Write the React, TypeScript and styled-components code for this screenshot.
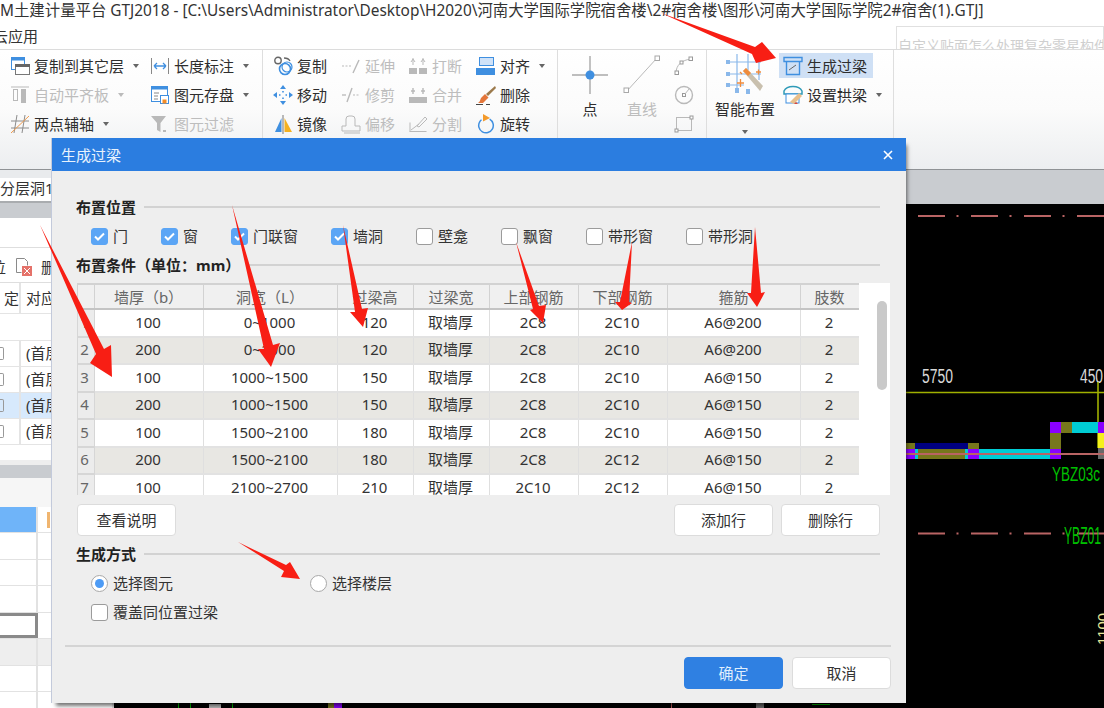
import React from "react";
import styled, { createGlobalStyle } from "styled-components";

const FONT = `"Noto Sans", "Noto Sans CJK SC", sans-serif`;

const GlobalStyle = createGlobalStyle`
  html, body {
    margin: 0;
    padding: 0;
    background: #fff;
    overflow: hidden;
  }
  * {
    box-sizing: border-box;
  }
`;

/* ---------- ribbon icons ---------- */

const Svg = ({ children, size = 20, w, h }: { children: React.ReactNode; size?: number; w?: number; h?: number }) => (
  <svg width={w ?? size} height={h ?? size} viewBox={`0 0 ${w ?? size} ${h ?? size}`} fill="none">
    {children}
  </svg>
);

const BLUE = "#3f8fe0";
const GREY = "#b9b9b9";

const icons: Record<string, React.ReactNode> = {
  copyLayer: (
    <Svg>
      <rect x="1.5" y="1.5" width="13" height="12" fill="#fff" stroke={BLUE} />
      <rect x="1" y="1" width="14" height="3.5" fill={BLUE} />
      <rect x="5.5" y="8.5" width="14" height="10" fill="#fff" stroke="#777" />
      <rect x="5" y="8" width="15" height="3" fill="#666" />
    </Svg>
  ),
  autoFlat: (
    <Svg>
      <path d="M1 2h18" stroke={GREY} />
      <rect x="3.5" y="4.5" width="4" height="11" stroke={GREY} />
      <rect x="11" y="4" width="5" height="14" fill={GREY} />
    </Svg>
  ),
  twoPoint: (
    <Svg>
      <path d="M7 1l-3 18M15 1l-3 18M1 7h18M1 14h18" stroke="#8c8c8c" />
      <path d="M1 19L19 2" stroke="#ee9a4d" />
    </Svg>
  ),
  length: (
    <Svg>
      <path d="M1.5 2v16M18.5 2v16" stroke="#888" />
      <path d="M4 10h12M4 10l3-3M4 10l3 3M16 10l-3-3M16 10l-3 3" stroke={BLUE} strokeWidth="1.3" />
    </Svg>
  ),
  save: (
    <Svg>
      <rect x="1.5" y="1.5" width="16" height="15" fill="#fff" stroke={BLUE} />
      <rect x="1" y="1" width="17" height="3.5" fill={BLUE} />
      <path d="M4 8h5M4 11h4M4 14h4" stroke="#888" />
      <rect x="10.5" y="10.5" width="8" height="8" fill="#fff" stroke={BLUE} />
      <rect x="12.5" y="14.5" width="4" height="4" fill="#f28c28" />
    </Svg>
  ),
  filter: (
    <Svg>
      <path d="M1 2h15l-5.5 7v9L7 16V9z" fill={GREY} />
      <path d="M13 17h3" stroke={GREY} strokeWidth="2" />
    </Svg>
  ),
  copy: (
    <Svg>
      <circle cx="5" cy="4.5" r="3.2" stroke="#666" strokeWidth="1.4" />
      <circle cx="12" cy="13" r="5.5" stroke={BLUE} strokeWidth="1.6" />
      <circle cx="14" cy="11" r="5" stroke={BLUE} strokeWidth="1.2" />
      <path d="M11 2c3 0 5 1 6 3" stroke="#666" strokeWidth="1.3" />
    </Svg>
  ),
  move: (
    <Svg>
      <path d="M10 0l3 4H7zM10 20l3-4H7zM0 10l4-3v6zM20 10l-4-3v6z" fill={BLUE} />
      <path d="M6 10h1.5M12.5 10H14M10 6v1.5M10 12.5V14" stroke={BLUE} strokeWidth="1.6" />
    </Svg>
  ),
  mirror: (
    <Svg>
      <path d="M8.5 4v14H2z" fill={BLUE} />
      <path d="M11.5 4v14H19z" fill="#f5b120" />
      <path d="M10 1v19" stroke="#777" />
    </Svg>
  ),
  extend: (
    <Svg>
      <path d="M1 10h10" stroke={GREY} strokeDasharray="2 1.5" />
      <path d="M12 17l6-13" stroke={GREY} strokeWidth="1.4" />
    </Svg>
  ),
  trim: (
    <Svg>
      <path d="M1 10h4" stroke={GREY} strokeWidth="1.3" />
      <path d="M6 17l5-14" stroke={GREY} strokeWidth="1.4" />
      <path d="M12 10h7" stroke={GREY} strokeDasharray="2 1.5" />
    </Svg>
  ),
  offset: (
    <Svg>
      <path d="M1 17v-5h4V5a3 3 0 013-3h3a3 3 0 013 3v7h5v5z" stroke={GREY} />
      <path d="M3 19h16" stroke={GREY} />
    </Svg>
  ),
  breakTool: (
    <Svg>
      <rect x="1" y="12" width="8" height="6" fill={GREY} />
      <rect x="11" y="12" width="8" height="6" fill={GREY} />
      <path d="M5 2v7M15 2v7M3 6l2-3 2 3M13 6l2-3 2 3" stroke={GREY} />
    </Svg>
  ),
  merge: (
    <Svg>
      <rect x="1" y="12" width="18" height="6" fill={GREY} />
      <path d="M5 3v6M15 3v6M3 6h4M13 6h4" stroke={GREY} strokeWidth="1.4" />
    </Svg>
  ),
  split: (
    <Svg>
      <path d="M1.5 17.5h17M2 8.5v9h15" stroke={GREY} />
      <path d="M3 16l8-6" stroke={GREY} />
      <path d="M9 12l8-9 2 2-8 8z" stroke={GREY} />
    </Svg>
  ),
  align: (
    <Svg>
      <rect x="3.5" y="1.5" width="14" height="8" fill="#cfe2f8" stroke={BLUE} />
      <rect x="0" y="12" width="19" height="7" fill={BLUE} />
    </Svg>
  ),
  brush: (
    <Svg>
      <path d="M19 1l-9 8 2 2 8-8z" fill="#9c7a4c" />
      <path d="M9 9l3.5 3.5L7 18H2c2-1 2-3 3-5z" fill="#e4763a" />
      <path d="M0 19.5h7M10 19.5h4" stroke="#444" />
    </Svg>
  ),
  rotate: (
    <Svg>
      <circle cx="10" cy="11.5" r="7.3" stroke={BLUE} strokeWidth="1.5" strokeDasharray="37 9" transform="rotate(-60 10 11.5)" />
      <path d="M7 0l7 4-7 3.5z" fill="#f39a2c" />
    </Svg>
  ),
  point: (
    <Svg w={38} h={40}>
      <path d="M19 1v38M1 20h36" stroke="#a9a9a9" strokeWidth="1.4" />
      <circle cx="19" cy="20" r="4.5" fill={BLUE} />
    </Svg>
  ),
  line: (
    <Svg w={38} h={40}>
      <path d="M3 37L34 3" stroke={GREY} />
      <rect x="1" y="33" width="4.5" height="4.5" fill="#fff" stroke="#a8a8a8" />
      <rect x="32" y="1" width="4.5" height="4.5" fill="#fff" stroke="#a8a8a8" />
    </Svg>
  ),
  arc: (
    <Svg>
      <path d="M2 17C2 9 8 4 17 3" stroke={GREY} />
      <rect x="1" y="15" width="3.5" height="3.5" fill="#fff" stroke="#999" />
      <rect x="6" y="5" width="3" height="3" fill="#fff" stroke="#999" />
      <rect x="15" y="1" width="3.5" height="3.5" fill="#fff" stroke="#999" />
    </Svg>
  ),
  circle: (
    <Svg>
      <circle cx="10" cy="10" r="8.5" stroke={GREY} strokeWidth="1.4" />
      <rect x="8.5" y="8.5" width="3" height="3" stroke="#999" />
      <path d="M11 9l4-5" stroke={GREY} />
    </Svg>
  ),
  rect: (
    <Svg>
      <rect x="2.5" y="3.5" width="15" height="13" stroke={GREY} />
      <rect x="1" y="15" width="3" height="3" fill="#fff" stroke="#999" />
      <rect x="16" y="2" width="3" height="3" fill="#fff" stroke="#999" />
    </Svg>
  ),
  smart: (
    <Svg w={40} h={44}>
      <path d="M3 9h33M3 21h33M3 32h16M12 1v34M23 1v16M34 1v26" stroke="#8ab8ea" strokeWidth="1.2" />
      <rect x="1" y="7" width="4" height="4" fill="#8ab8ea" />
      <rect x="1" y="19" width="4" height="4" fill="#8ab8ea" />
      <rect x="1" y="30" width="4" height="4" fill="#8ab8ea" />
      <rect x="10" y="35" width="4" height="5" fill="#8ab8ea" />
      <rect x="21" y="36" width="4" height="5" fill="#8ab8ea" />
      <path d="M18 18l3-3 17 18-3 5z" fill="#c9c0ae" />
      <path d="M18 18l3-3 5 5-3 3z" fill="#ef8c3d" />
      <path d="M12 30h7M15.5 26v8M31 19h5M33.5 16.5v5M15 19l2 2" stroke="#ef8c3d" strokeWidth="1.3" />
    </Svg>
  ),
  lintel: (
    <Svg>
      <path d="M1 1.5h18v4H1z" stroke={BLUE} strokeWidth="1.4" />
      <path d="M3.5 5.5v13h13v-13" stroke={BLUE} strokeWidth="1.4" />
      <path d="M6 14l7-5" stroke="#666" />
    </Svg>
  ),
  arch: (
    <Svg>
      <path d="M1 6C4 0 16 0 19 6v3H1z" stroke="#2f9bb8" strokeWidth="1.5" />
      <rect x="3" y="9" width="13" height="9" fill="#fff" stroke={BLUE} />
      <path d="M7 17l9-9 3 3-8 8z" fill="#e9bf8c" />
      <path d="M11 19l2-2 2 2z" fill="#d9483b" />
    </Svg>
  ),
};

const Caret = styled.span<{ $off?: boolean }>`
  display: inline-block;
  width: 0;
  height: 0;
  margin-left: 5px;
  border-left: 3.5px solid transparent;
  border-right: 3.5px solid transparent;
  border-top: 4px solid ${({ $off }) => ($off ? "#bbb" : "#666")};
`;

/* ---------- window chrome ---------- */

const Page = styled.div`
  position: relative;
  width: 1104px;
  height: 708px;
  overflow: hidden;
  display: flex;
  flex-direction: column;
  font-family: ${FONT};
  background: #fff;
  color: #333;
`;

const TitleBar = styled.div`
  height: 24px;
  flex: none;
  font-size: 15.4px;
  line-height: 21px;
  color: #333;
  white-space: nowrap;
`;

const MenuRow = styled.div`
  height: 26px;
  flex: none;
  display: flex;
  border-bottom: 1px solid #dcdcdc;
  overflow: hidden;
`;

const MenuItem = styled.span`
  margin-left: -7px;
  font-size: 15px;
  line-height: 24px;
  color: #333;
`;

const SearchBox = styled.div`
  margin-left: auto;
  margin-top: 2px;
  width: 208px;
  height: 24px;
  padding: 10px 0 0 1px;
  border: 1px solid #e0e0e0;
  border-bottom: 0;
  font-size: 14px;
  line-height: 18px;
  color: #cfcfcf;
  white-space: nowrap;
  overflow: hidden;
`;

const Ribbon = styled.div`
  height: 120px;
  flex: none;
  display: flex;
  background: linear-gradient(#fff, #fbfbfb 50%, #eceef0);
  border-bottom: 1px solid #8f9295;
`;

const Group = styled.div<{ $width: number; $left: number; $gap?: number }>`
  width: ${({ $width }) => $width}px;
  height: 114px;
  padding: 1px 0 0 ${({ $left }) => $left}px;
  display: flex;
  gap: ${({ $gap }) => $gap ?? 0}px;
  border-right: 1px solid #dedede;
  flex: none;
`;

const ToolGrid = styled.div<{ $cols: string }>`
  display: grid;
  grid-template-columns: ${({ $cols }) => $cols};
  grid-auto-rows: 29px;
`;

const Tool = styled.div<{ $off?: boolean }>`
  display: flex;
  align-items: center;
  gap: 4px;
  height: 29px;
  font-size: 15px;
  line-height: 20px;
  white-space: nowrap;
  color: ${({ $off }) => ($off ? "#bdbdbd" : "#2e2e2e")};
  svg {
    flex: none;
  }
`;

const ActiveTool = styled(Tool)`
  width: 94px;
  height: 25px;
  margin: 2px 0 2px;
  padding-left: 4px;
  background: #cfe0f5;
`;

const PlainTool = styled(Tool)`
  padding-left: 4px;
`;

const BigTool = styled.div<{ $width: number; $off?: boolean }>`
  width: ${({ $width }) => $width}px;
  display: flex;
  flex-direction: column;
  align-items: center;
  font-size: 15px;
  line-height: 20px;
  white-space: nowrap;
  color: ${({ $off }) => ($off ? "#bdbdbd" : "#2e2e2e")};
`;

const BigIcon = styled.div`
  height: 48px;
  display: flex;
  align-items: center;
  justify-content: center;
`;

const ToolColumn = styled.div`
  display: flex;
  flex-direction: column;
`;

const SmallIcon = styled.div`
  height: 29px;
  display: flex;
  align-items: center;
`;

const CaretLine = styled.div`
  line-height: 12px;
  margin: 3px 0 0 -5px;
`;

/* ---------- panel behind the dialog ---------- */

const Work = styled.div`
  flex: 1;
  display: flex;
  min-height: 0;
`;

const SidePanel = styled.div`
  width: 114px;
  flex: none;
  display: flex;
  flex-direction: column;
  background: #fff;
  overflow: hidden;
`;

const TabStrip = styled.div`
  height: 33px;
  flex: none;
  padding-top: 8px;
  background: #e9ebed;
  border-bottom: 2px solid #a9acaf;
`;

const Tab = styled.div`
  height: 23px;
  background: #fff;
  font-size: 15px;
  line-height: 20px;
  white-space: nowrap;
  color: #333;
`;

const GreyBand = styled.div<{ $h: number }>`
  height: ${({ $h }) => $h}px;
  flex: none;
  background: #c9ccd0;
`;

const Gap = styled.div<{ $h: number; $bg?: string }>`
  height: ${({ $h }) => $h}px;
  flex: none;
  background: ${({ $bg }) => $bg ?? "#fff"};
`;

const PanelTools = styled.div`
  height: 36px;
  flex: none;
  padding-top: 3px;
  display: flex;
  align-items: center;
  gap: 9px;
  margin-left: -9px;
  font-size: 15px;
  line-height: 20px;
  border-top: 1px solid #dedede;
  border-bottom: 1px solid #dedede;
`;

const PanelRow = styled.div<{ $selected?: boolean; $h?: number }>`
  height: ${({ $h }) => $h ?? 26}px;
  flex: none;
  display: grid;
  grid-template-columns: 19px 1fr;
  align-items: stretch;
  border-bottom: 1px solid #e4e4e4;
  font-size: 15px;
  line-height: ${({ $h }) => ($h ?? 26) - 1}px;
  color: #333;
  background: ${({ $selected }) => ($selected ? "#d7e9fc" : "#fff")};
`;

const PanelCell = styled.div`
  white-space: nowrap;
  overflow: hidden;
  padding-left: 5px;
  border-left: 2px solid #e4e4e4;
  &:first-child {
    border-left: 0;
    padding-left: 0;
    text-align: right;
  }
`;

const LockMark = styled.span`
  display: inline-block;
  width: 4px;
  height: 13px;
  margin-top: 6px;
  margin-right: 15px;
  border: 1px solid #999;
  border-left: 0;
  border-radius: 0 2px 2px 0;
`;

const SheetRow = styled.div<{ $bg?: string; $h?: number }>`
  height: ${({ $h }) => $h ?? 26.5}px;
  flex: none;
  display: grid;
  grid-template-columns: 38px 1fr;
  border-bottom: 1px solid #e2e2e2;
  background: ${({ $bg }) => $bg ?? "#fff"};
`;

const SheetCell = styled.div<{ $head?: boolean; $focus?: boolean }>`
  border-right: 2px solid #e2e2e2;
  background: ${({ $head }) => ($head ? "#6fb4f9" : "transparent")};
  ${({ $focus }) => ($focus ? "border: 3px solid #8a8a8a; margin-left: -3px; background: #fff;" : "")}
`;

const SheetMark = styled.div`
  width: 3px;
  height: 16px;
  margin: 5px 0 0 9px;
  background: #f0b56f;
`;

const CanvasColumn = styled.div`
  flex: 1;
  display: flex;
  flex-direction: column;
  background: #000;
`;

const CanvasSvg = styled.svg`
  display: block;
  flex: none;
`;

/* ---------- dialog ---------- */

const Dialog = styled.div`
  position: absolute;
  left: 51px;
  top: 138px;
  width: 855px;
  height: 565px;
  background: #eeeeee;
  border-left: 1px solid #c3cadb;
  box-shadow: 3px 5px 4px -2px rgba(0, 0, 0, 0.55);
  display: flex;
  flex-direction: column;
`;

const DialogHeader = styled.div`
  height: 33px;
  flex: none;
  display: flex;
  align-items: center;
  justify-content: space-between;
  padding: 0 13px 0 9px;
  background: #2b7de0;
  color: #e8f2fd;
  font-size: 15px;
  line-height: 20px;
`;

const DialogBody = styled.div`
  flex: 1;
  padding: 26px 26px 0 24px;
  font-size: 15px;
  line-height: 20px;
  color: #333;
`;

const Section = styled.div<{ $top?: number }>`
  display: flex;
  align-items: center;
  gap: 8px;
  height: 20px;
  margin-top: ${({ $top }) => $top ?? 0}px;
  font-weight: 700;
  color: #222;
  white-space: nowrap;
  &::after {
    content: "";
    flex: 1;
    height: 1.5px;
    background: #d2d2d2;
  }
`;

const CheckRow = styled.div<{ $gap: number; $top: number }>`
  display: flex;
  gap: ${({ $gap }) => $gap}px;
  height: 20px;
  margin-top: ${({ $top }) => $top}px;
  padding-left: 15px;
`;

const Option = styled.label`
  display: flex;
  align-items: center;
  gap: 5px;
  white-space: nowrap;
  color: #333;
`;

const Box = styled.span<{ $on?: boolean }>`
  width: 17px;
  height: 17px;
  flex: none;
  display: flex;
  align-items: center;
  justify-content: center;
  border-radius: 3px;
  background: ${({ $on }) => ($on ? "#5ba5f5" : "#fff")};
  border: 1px solid ${({ $on }) => ($on ? "#5ba5f5" : "#9b9b9b")};
`;

const Radio = styled.span<{ $on?: boolean }>`
  width: 17px;
  height: 17px;
  flex: none;
  border-radius: 50%;
  background: #fff;
  border: 1.5px solid #a8a8a8;
  display: flex;
  align-items: center;
  justify-content: center;
  &::after {
    content: "";
    width: 9px;
    height: 9px;
    border-radius: 50%;
    background: ${({ $on }) => ($on ? "#4d9bf5" : "transparent")};
  }
`;

const TableArea = styled.div`
  display: flex;
  width: 813px;
  height: 212px;
  margin-top: 8px;
  margin-left: 1px;
  background: #fff;
  overflow: hidden;
`;

const TableClip = styled.div`
  width: 782px;
  flex: none;
  overflow: hidden;
`;

const Table = styled.table`
  width: 782px;
  table-layout: fixed;
  border-collapse: collapse;
  font-size: 15px;
  line-height: 20px;
`;

const Th = styled.th`
  height: 25px;
  padding: 0 1px 0 0;
  font-weight: 400;
  color: #666;
  background: #f0f0f0;
  border: 1px solid #d2d2d2;
  border-bottom: 2px solid #c4c4c4;
  border-top: 2px solid #d2d2d2;
`;

const Td = styled.td<{ $alt?: boolean }>`
  height: 27.5px;
  padding: 0 2px 2px 0;
  text-align: center;
  color: #333;
  background: ${({ $alt }) => ($alt ? "#e8e7e3" : "#fff")};
  border: 1px solid #dfdfdf;
  border-bottom: 2px solid #e2e2e2;
`;

const RowNo = styled(Td)`
  background: #ececec;
  color: #666;
  border-color: #d6d6d6;
  padding-right: 3px;
`;

const ScrollTrack = styled.div`
  flex: 1;
  padding: 18px 0 0 18px;
`;

const ScrollThumb = styled.div`
  width: 10px;
  height: 89px;
  border-radius: 5px;
  background: #c9c9c9;
`;

const ButtonRow = styled.div`
  display: flex;
  gap: 8px;
  margin-top: 9px;
  margin-left: 1px;
`;

const Button = styled.div<{ $primary?: boolean }>`
  width: 99px;
  height: 32px;
  display: flex;
  align-items: center;
  justify-content: center;
  border-radius: 4px;
  background: ${({ $primary }) => ($primary ? "#2f80e2" : "#fff")};
  color: ${({ $primary }) => ($primary ? "#dfeefd" : "#333")};
  border: 1.5px solid ${({ $primary }) => ($primary ? "#2f80e2" : "#dcdcdc")};
`;

const PushRight = styled.div`
  margin-left: auto;
`;

const Footer = styled.div`
  display: flex;
  justify-content: flex-end;
  gap: 9px;
  margin: 23px -11px 0 -11px;
  padding-top: 10px;
  border-top: 2px solid #d4d4d4;
`;

const ArrowLayer = styled.svg`
  position: absolute;
  left: 0;
  top: 0;
  pointer-events: none;
`;

/* ---------- data ---------- */

const positions = [
  { label: "门", on: true },
  { label: "窗", on: true },
  { label: "门联窗", on: true },
  { label: "墙洞", on: true },
  { label: "壁龛" },
  { label: "飘窗" },
  { label: "带形窗" },
  { label: "带形洞" },
];

const columns = [
  { w: 17, t: "" },
  { w: 109, t: "墙厚（b）" },
  { w: 134, t: "洞宽（L）" },
  { w: 76, t: "过梁高" },
  { w: 76, t: "过梁宽" },
  { w: 89, t: "上部钢筋" },
  { w: 89, t: "下部钢筋" },
  { w: 133, t: "箍筋" },
  { w: 59, t: "肢数" },
];

const rows = [
  ["100", "0~1000", "120", "取墙厚", "2C8", "2C10", "A6@200", "2"],
  ["200", "0~1000", "120", "取墙厚", "2C8", "2C10", "A6@200", "2"],
  ["100", "1000~1500", "150", "取墙厚", "2C8", "2C10", "A6@150", "2"],
  ["200", "1000~1500", "150", "取墙厚", "2C8", "2C10", "A6@150", "2"],
  ["100", "1500~2100", "180", "取墙厚", "2C8", "2C10", "A6@150", "2"],
  ["200", "1500~2100", "180", "取墙厚", "2C8", "2C12", "A6@150", "2"],
  ["100", "2100~2700", "210", "取墙厚", "2C10", "2C12", "A6@150", "2"],
];

const arrows = [
  "661,13 755,47 762,42 776,58 756,63 752,54",
  "40,225 104,349 111,345 112,377 90,363 96,354",
  "232,205 273,345 280,343 271,367 258,349 264,349",
  "343,225 362,309 368,308 363,327 350,312 355,312",
  "516,242 539,306 546,305 543,323 530,310 533,309",
  "632,242 629,302 632,303 622,310 615,302 620,302",
  "755,227 761,293 765,292 757,307 747,293 751,293",
  "238,542 286,565 290,562 300,579 281,577 284,571",
];

const first = [
  { icon: "copyLayer", text: "复制到其它层", caret: true },
  { icon: "length", text: "长度标注", caret: true },
  { icon: "autoFlat", text: "自动平齐板", caret: true, off: true },
  { icon: "save", text: "图元存盘", caret: true },
  { icon: "twoPoint", text: "两点辅轴", caret: true },
  { icon: "filter", text: "图元过滤", off: true },
];

const second = [
  { icon: "copy", text: "复制" },
  { icon: "extend", text: "延伸", off: true },
  { icon: "breakTool", text: "打断", off: true },
  { icon: "align", text: "对齐", caret: true },
  { icon: "move", text: "移动" },
  { icon: "trim", text: "修剪", off: true },
  { icon: "merge", text: "合并", off: true },
  { icon: "brush", text: "删除" },
  { icon: "mirror", text: "镜像" },
  { icon: "offset", text: "偏移", off: true },
  { icon: "split", text: "分割", off: true },
  { icon: "rotate", text: "旋转" },
];

const CheckMark = () => (
  <svg width="11" height="9" viewBox="0 0 11 9" fill="none">
    <path d="M1 4.5l3 3 6-6" stroke="#fff" strokeWidth="2" />
  </svg>
);

const Dashes = ({ y }: { y: number }) => {
  const items: React.ReactNode[] = [];
  for (let x = 918; x < 1104; x += 53) {
    items.push(<rect key={x} x={x} y={y} width={27} height={2} fill="#b96464" />);
    items.push(<rect key={x + "d"} x={x + 38.5} y={y} width={2} height={2} fill="#b96464" />);
  }
  return <>{items}</>;
};

const Drawing = () => (
  <CanvasSvg viewBox="114 204 990 504" width="990" height="504">
    <Dashes y={215} />
    <Dashes y={532.5} />
    <text x="922" y="383" fill="#d8d8d8" fontFamily="Liberation Sans" fontSize="20" textLength="31" lengthAdjust="spacingAndGlyphs">5750</text>
    <text x="1080" y="383" fill="#d8d8d8" fontFamily="Liberation Sans" fontSize="20" textLength="23" lengthAdjust="spacingAndGlyphs">450</text>
    <path d="M906 392.5H1104M1098 382V448" stroke="#a0b000" strokeWidth="1.6" />

    <rect x="906" y="443" width="9" height="6" fill="#77771c" />
    <rect x="915" y="443" width="53" height="6" fill="#000080" />
    <rect x="968" y="443" width="11" height="6" fill="#77771c" />
    <rect x="906" y="449" width="9" height="10" fill="#8a00ff" />
    <rect x="915" y="449" width="3" height="10" fill="#00cdd4" />
    <rect x="918" y="449" width="47" height="10" fill="#77771c" />
    <rect x="965" y="449" width="3" height="10" fill="#00cdd4" />
    <rect x="968" y="449" width="11" height="10" fill="#8a00ff" />
    <rect x="979" y="449" width="71" height="10" fill="#00cdd4" />
    <rect x="1050" y="449" width="11" height="10" fill="#8a00ff" />
    <rect x="1050" y="422" width="11" height="11" fill="#8a00ff" />
    <rect x="1061" y="422" width="11" height="11" fill="#77771c" />
    <rect x="1072" y="422" width="26" height="11" fill="#00cdd4" />
    <rect x="1098" y="422" width="6" height="11" fill="#8a00ff" />
    <rect x="1050" y="433" width="11" height="16" fill="#77771c" />
    <rect x="1098" y="433" width="6" height="15" fill="#f5f01c" />
    <rect x="1098" y="448" width="6" height="11" fill="#6a6a6a" />
    <path d="M906 454H1104" stroke="#b96464" strokeWidth="2" />

    <text x="1052" y="481" fill="#00c000" fontFamily="Liberation Sans" fontSize="20" textLength="48" lengthAdjust="spacingAndGlyphs">YBZ03c</text>
    <text x="1064" y="544" fill="#00c000" fontFamily="Liberation Sans" fontSize="23" textLength="37" lengthAdjust="spacingAndGlyphs">YBZ01</text>
    <text transform="translate(1108 645) rotate(-90)" fill="#e6e69a" fontFamily="Liberation Sans" fontSize="14" textLength="32" lengthAdjust="spacingAndGlyphs">1100</text>

    <rect x="178" y="703" width="1" height="5" fill="#00b400" />
    <rect x="190" y="703" width="1" height="5" fill="#00b400" />
    <rect x="209" y="704" width="12" height="4" fill="#bbb" />
    <rect x="232" y="703" width="1" height="5" fill="#00b400" />
    <rect x="328" y="703" width="6" height="5" fill="#77771c" />
    <rect x="334" y="703" width="8" height="5" fill="#8a00ff" />
    <rect x="671" y="703" width="1" height="5" fill="#b85a5a" />
    <rect x="756" y="703" width="8" height="5" fill="#6a6a6a" />
    <rect x="812" y="704" width="18" height="1" fill="#00b400" />
  </CanvasSvg>
);

export default function App() {
  return (
    <>
      <GlobalStyle />
      <Page>
        <TitleBar>M土建计量平台 GTJ2018 - [C:\Users\Administrator\Desktop\H2020\河南大学国际学院宿舍楼\2#宿舍楼\图形\河南大学国际学院2#宿舍(1).GTJ]</TitleBar>
        <MenuRow>
          <MenuItem>云应用</MenuItem>
          <SearchBox>自定义贴面怎么处理复杂零星构件</SearchBox>
        </MenuRow>

        <Ribbon>
          <Group $width={263} $left={10}>
            <ToolGrid $cols="140px 110px">
              {first.map((t) => (
                <Tool key={t.text} $off={t.off}>
                  {icons[t.icon]}
                  <span>{t.text}</span>
                  {t.caret && <Caret $off={t.off} />}
                </Tool>
              ))}
            </ToolGrid>
          </Group>
          <Group $width={295} $left={10}>
            <ToolGrid $cols="68px 67px 68px 80px">
              {second.map((t) => (
                <Tool key={t.text} $off={t.off}>
                  {icons[t.icon]}
                  <span>{t.text}</span>
                  {t.caret && <Caret />}
                </Tool>
              ))}
            </ToolGrid>
          </Group>
          <Group $width={149} $left={12} $gap={12}>
            <BigTool $width={40}>
              <BigIcon>{icons.point}</BigIcon>
              点
            </BigTool>
            <BigTool $width={40} $off>
              <BigIcon>{icons.line}</BigIcon>
              直线
            </BigTool>
            <ToolColumn>
              <SmallIcon>{icons.arc}</SmallIcon>
              <SmallIcon>{icons.circle}</SmallIcon>
              <SmallIcon>{icons.rect}</SmallIcon>
            </ToolColumn>
          </Group>
          <Group $width={187} $left={8} $gap={4}>
            <BigTool $width={60}>
              <BigIcon>{icons.smart}</BigIcon>
              智能布置
              <CaretLine>
                <Caret />
              </CaretLine>
            </BigTool>
            <ToolColumn>
              <ActiveTool>
                {icons.lintel}
                <span>生成过梁</span>
              </ActiveTool>
              <PlainTool>
                {icons.arch}
                <span>设置拱梁</span>
                <Caret />
              </PlainTool>
            </ToolColumn>
          </Group>
        </Ribbon>

        <Work>
          <SidePanel>
            <TabStrip>
              <Tab>分层洞1</Tab>
            </TabStrip>
            <GreyBand $h={15} />
            <Gap $h={29} />
            <PanelTools>
              <span>位</span>
              <svg width="17" height="19" viewBox="0 0 17 19" fill="none">
                <path d="M1.5 1.5h8l3 3v4M1.5 1.5v14h5" stroke="#8a8a8a" />
                <rect x="7" y="9" width="10" height="10" fill="#e5726a" />
                <path d="M9 11l6 6M15 11l-6 6" stroke="#fff" />
              </svg>
              <span>删除</span>
            </PanelTools>
            <PanelRow $h={31}>
              <PanelCell>定</PanelCell>
              <PanelCell>对应</PanelCell>
            </PanelRow>
            <PanelRow $h={27} />
            {[false, false, true, false].map((sel, i) => (
              <PanelRow key={i} $selected={sel}>
                <PanelCell>
                  <LockMark />
                </PanelCell>
                <PanelCell>(首层)</PanelCell>
              </PanelRow>
            ))}
            <Gap $h={15} />
            <Gap $h={5} $bg="#eeeeee" />
            <GreyBand $h={13} />
            <Gap $h={29} $bg="#f6f6f6" />
            <SheetRow $h={26}>
              <SheetCell $head />
              <SheetCell>
                <SheetMark />
              </SheetCell>
            </SheetRow>
            <SheetRow>
              <SheetCell />
              <SheetCell />
            </SheetRow>
            <SheetRow>
              <SheetCell />
              <SheetCell />
            </SheetRow>
            <SheetRow>
              <SheetCell />
              <SheetCell />
            </SheetRow>
            <SheetRow>
              <SheetCell $focus />
              <SheetCell />
            </SheetRow>
            <SheetRow $bg="#eeeeee">
              <SheetCell />
              <SheetCell />
            </SheetRow>
            <SheetRow>
              <SheetCell />
              <SheetCell />
            </SheetRow>
            <SheetRow>
              <SheetCell />
              <SheetCell />
            </SheetRow>
          </SidePanel>
          <CanvasColumn>
            <GreyBand $h={34} />
            <Drawing />
          </CanvasColumn>
        </Work>

        <Dialog>
          <DialogHeader>
            生成过梁
            <svg width="10" height="10" viewBox="0 0 10 10" fill="none">
              <path d="M1 1l8 8M9 1l-8 8" stroke="#fff" strokeWidth="1.6" />
            </svg>
          </DialogHeader>
          <DialogBody>
            <Section>布置位置</Section>
            <CheckRow $gap={33} $top={9}>
              {positions.map((p) => (
                <Option key={p.label}>
                  <Box $on={p.on}>{p.on && <CheckMark />}</Box>
                  {p.label}
                </Option>
              ))}
            </CheckRow>
            <Section $top={9}>布置条件（单位：mm）</Section>
            <TableArea>
              <TableClip>
                <Table>
                  <colgroup>
                    {columns.map((c, i) => (
                      <col key={i} width={c.w} />
                    ))}
                  </colgroup>
                  <thead>
                    <tr>
                      {columns.map((c, i) => (
                        <Th key={i}>{c.t}</Th>
                      ))}
                    </tr>
                  </thead>
                  <tbody>
                    {rows.map((r, i) => (
                      <tr key={i}>
                        <RowNo>{i + 1}</RowNo>
                        {r.map((v, j) => (
                          <Td key={j} $alt={i % 2 === 1}>
                            {v}
                          </Td>
                        ))}
                      </tr>
                    ))}
                  </tbody>
                </Table>
              </TableClip>
              <ScrollTrack>
                <ScrollThumb />
              </ScrollTrack>
            </TableArea>
            <ButtonRow>
              <Button>查看说明</Button>
              <PushRight />
              <Button>添加行</Button>
              <Button>删除行</Button>
            </ButtonRow>
            <Section $top={8}>生成方式</Section>
            <CheckRow $gap={137} $top={9}>
              <Option>
                <Radio $on />
                选择图元
              </Option>
              <Option>
                <Radio />
                选择楼层
              </Option>
            </CheckRow>
            <CheckRow $gap={0} $top={9}>
              <Option>
                <Box />
                覆盖同位置过梁
              </Option>
            </CheckRow>
            <Footer>
              <Button $primary>确定</Button>
              <Button>取消</Button>
            </Footer>
          </DialogBody>
        </Dialog>

        <ArrowLayer width="1104" height="708" viewBox="0 0 1104 708">
          {arrows.map((points) => (
            <polygon key={points} points={points} fill="#f81e14" />
          ))}
        </ArrowLayer>
      </Page>
    </>
  );
}
